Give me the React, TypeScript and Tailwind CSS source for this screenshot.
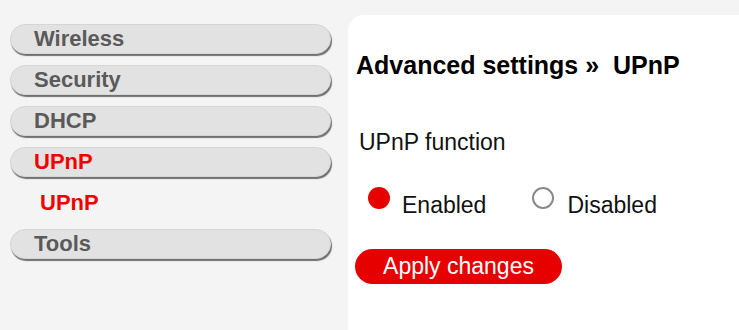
import { useState } from 'react';

const menu = [
  { label: 'Wireless' },
  { label: 'Security' },
  { label: 'DHCP' },
  { label: 'UPnP', active: true, children: ['UPnP'] },
  { label: 'Tools' },
];

function MenuPill({ label, active }: { label: string; active?: boolean }) {
  return (
    <div
      className={`h-[30px] w-[321px] rounded-full bg-[#e2e2e2] border border-[#d6d6d6] shadow-[1px_2px_1px_#707070] pl-[23px] text-[22px] font-bold leading-[28px] ${
        active ? 'text-[#f00000]' : 'text-[#5a5a5a]'
      }`}
    >
      {label}
    </div>
  );
}

export default function App() {
  const [enabled, setEnabled] = useState(true);

  return (
    <div
      className="w-[739px] h-[330px] bg-[#f4f4f4] flex overflow-hidden"
      style={{ fontFamily: '"Liberation Sans", Arial, sans-serif' }}
    >
      {/* Side menu */}
      <nav className="w-[348px] shrink-0 pl-[10px] pt-[24px] flex flex-col gap-[11px]">
        {menu.map((item) => (
          <div key={item.label} className="flex flex-col gap-[11px]">
            <MenuPill label={item.label} active={item.active} />
            {item.children?.map((child) => (
              <div
                key={child}
                className="h-[30px] pl-[30px] text-[22px] font-bold leading-[30px] text-[#f00000]"
              >
                {child}
              </div>
            ))}
          </div>
        ))}
      </nav>

      {/* Content panel */}
      <main className="flex-1 mt-[15px] bg-white rounded-tl-[16px] pl-[8px] pt-[38px]">
        <h1 className="text-[25px] font-bold leading-[25px] text-black whitespace-pre">
          {'Advanced settings »  UPnP'}
        </h1>

        <p className="mt-[53px] ml-[3px] text-[23px] leading-[23px] text-[#111]">UPnP function</p>

        <div className="mt-[33px] ml-[12px] flex items-start text-[23px] leading-[23px] text-[#111]">
          <button
            onClick={() => setEnabled(true)}
            className={`w-[22px] h-[22px] rounded-full shrink-0 ${
              enabled ? 'bg-[#e60000]' : 'bg-white border-2 border-[#8a8a8a]'
            }`}
          />
          <span className="mt-[7px] ml-[12px]">Enabled</span>
          <button
            onClick={() => setEnabled(false)}
            className={`ml-[46px] w-[22px] h-[22px] rounded-full shrink-0 ${
              !enabled ? 'bg-[#e60000]' : 'bg-white border-2 border-[#8a8a8a]'
            }`}
          />
          <span className="mt-[7px] ml-[13px]">Disabled</span>
        </div>

        <button className="mt-[32px] -ml-px h-[35px] w-[207px] rounded-full bg-[#e60000] text-white text-[23px] leading-[35px]">
          Apply changes
        </button>
      </main>
    </div>
  );
}
